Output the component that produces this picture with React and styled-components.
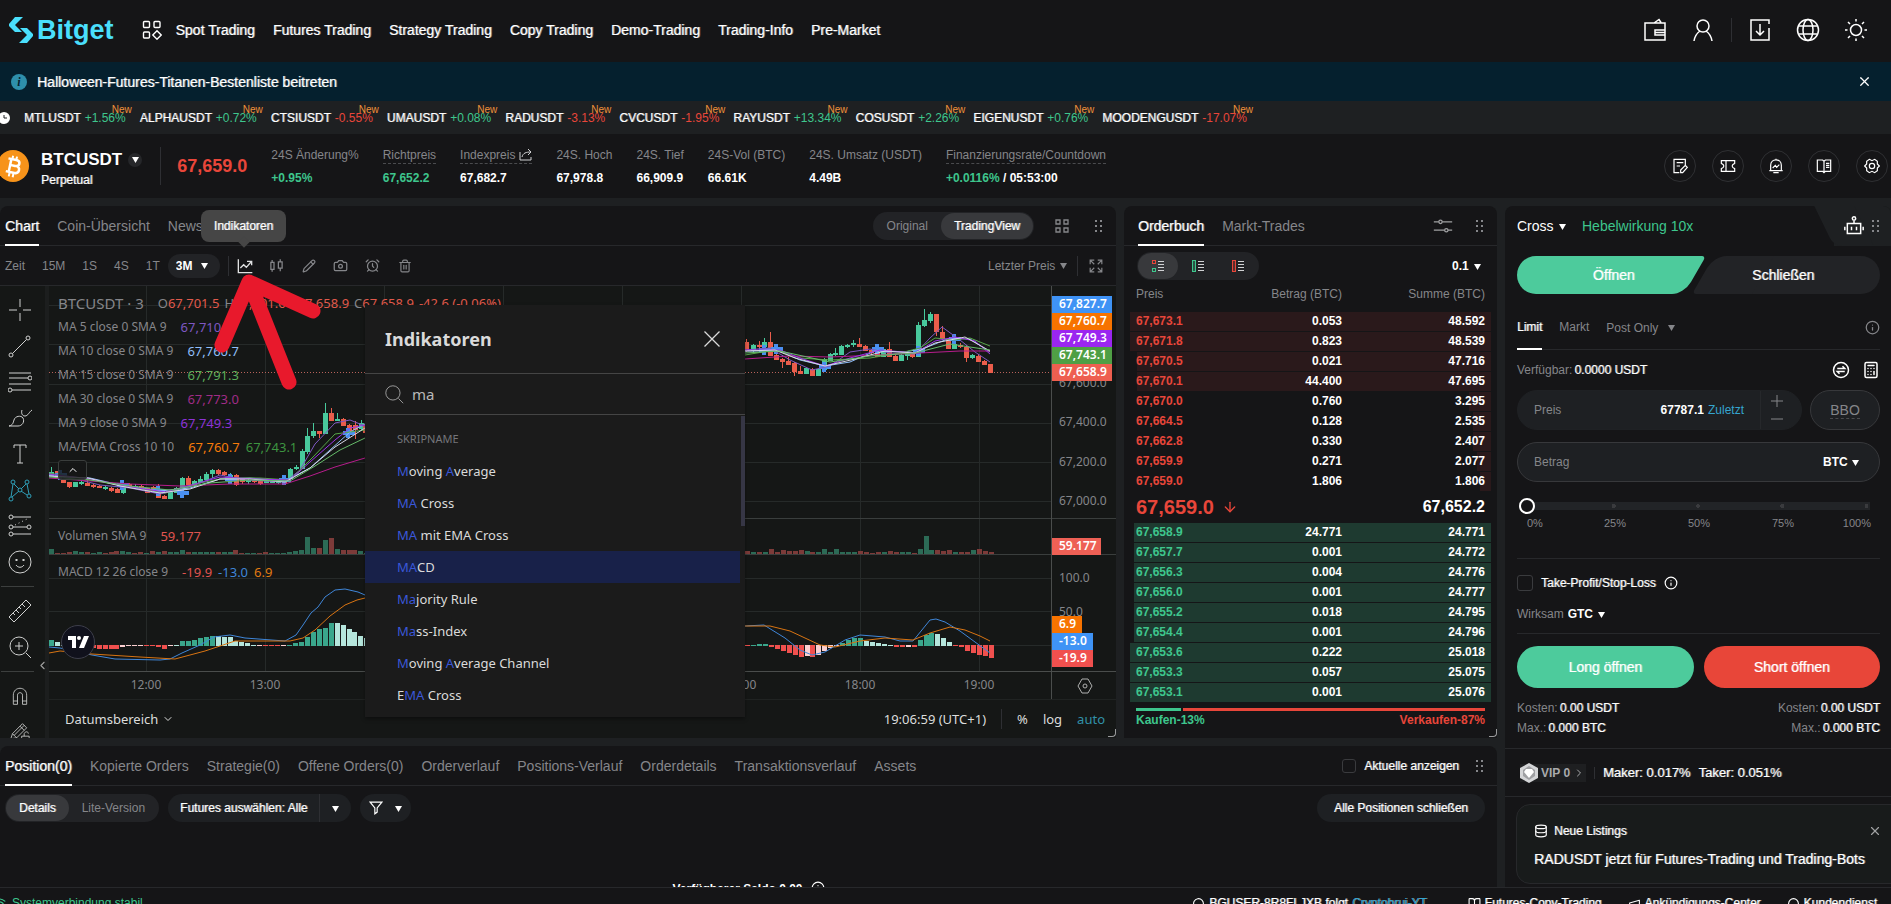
import { useState } from 'react';
import styled, { createGlobalStyle, css } from 'styled-components';
import {
  LuCamera,
  LuAlarmClock,
  LuTrash2,
  LuPencil,
  LuX,
  LuInfo,
  LuCalculator,
  LuDatabase,
  LuHeadphones,
  LuMegaphone,
  LuChevronDown,
  LuChevronUp,
  LuChevronRight,
  LuChevronLeft,
  LuBookOpen,
  LuArrowDown,
  LuWifi,
  LuMessageCircle,
} from 'react-icons/lu';

const GREEN = '#3ec68d';
const RED = '#e8463a';
const MUTED = '#85868a';
const PANEL = '#151517';
const GAP = '#1e2022';

const GlobalStyle = createGlobalStyle`
  * {
    box-sizing: border-box;
  }
  body {
    margin: 0;
    background: ${GAP};
    color: #ffffff;
    font-family: 'Liberation Sans', Arial, sans-serif;
    font-size: 12px;
    line-height: 16px;
    overflow: hidden;
  }
  button, input, select {
    font: inherit;
    color: inherit;
    background: none;
    border: 0;
    padding: 0;
    margin: 0;
    outline: none;
  }
  button, select {
    cursor: pointer;
    white-space: nowrap;
  }
  a {
    color: inherit;
    text-decoration: none;
  }
  svg {
    display: block;
    flex-shrink: 0;
  }
`;

const medium = css`
  text-shadow: 1px 0 rgba(255, 255, 255, 0.5);
`;

const flexCenter = css`
  display: flex;
  align-items: center;
  justify-content: center;
`;

const Page = styled.div`
  display: flex;
  flex-direction: column;
  height: 100vh;
  white-space: nowrap;
`;

/* ---------- header ---------- */

const Header = styled.header`
  display: flex;
  align-items: center;
  height: 62px;
  padding: 0 23px 2px 8px;
  background: ${PANEL};
`;

const Logo = styled.a`
  display: flex;
  align-items: center;
  gap: 3px;
  margin-right: 28px;
  color: #4adffc;
  font-size: 27px;
  font-weight: 700;
  line-height: 32px;
`;

const Nav = styled.nav`
  display: flex;
  align-items: center;
  gap: 18px;
  margin-left: 14px;
  font-size: 14px;
  ${medium};
`;

const HeaderIcons = styled.div`
  display: flex;
  align-items: center;
  gap: 24px;
  margin-left: auto;
`;

const IconButton = styled.button`
  ${flexCenter};
  width: ${(props) => props.$size || 24}px;
  height: ${(props) => props.$size || 24}px;
  color: ${(props) => props.$color || '#ffffff'};
`;

const Divider = styled.span`
  width: 1px;
  height: ${(props) => props.$h || 20}px;
  background: #2e2f33;
`;

const HeaderDivider = styled(Divider)`
  margin: 0 -8px;
`;

const Banner = styled.div`
  display: flex;
  align-items: center;
  height: 39px;
  padding: 0 19px 0 11px;
  background: #05202e;
  font-size: 14px;
`;

const BannerBadge = styled.span`
  ${flexCenter};
  width: 16px;
  height: 16px;
  margin-right: 10px;
  border-radius: 50%;
  background: #2e8fab;
  color: #05202e;
  font-family: 'Liberation Serif', serif;
  font-size: 12px;
  font-style: italic;
  font-weight: 700;
`;

const BannerText = styled.a`
  flex: 1;
  ${medium};
`;

/* ---------- ticker ---------- */

const Ticker = styled.div`
  display: flex;
  align-items: center;
  gap: 14px;
  height: 33px;
  background: ${GAP};
  overflow: hidden;
`;

const TickerItem = styled.a`
  position: relative;
  display: flex;
  gap: 4px;
  font-size: 12px;
  ${medium};
`;

const Change = styled.span`
  color: ${(props) => (props.$up ? GREEN : RED)};
  text-shadow: none;
`;

const NewFlag = styled.span`
  position: absolute;
  top: -6px;
  right: -6px;
  color: #f0913a;
  font-size: 10px;
  line-height: 12px;
  text-shadow: none;
`;

/* ---------- instrument bar ---------- */

const InfoBar = styled.section`
  display: flex;
  align-items: center;
  height: 64px;
  padding-right: 3px;
  background: ${PANEL};
`;

const Coin = styled.span`
  ${flexCenter};
  width: 32px;
  height: 32px;
  margin: 0 12px 0 -3px;
  border-radius: 50%;
  background: #f7931a;
`;

const Pair = styled.div`
  display: flex;
  flex-direction: column;
  gap: 2px;
  margin-right: 18px;
  padding-top: 5px;
`;

const PairName = styled.button`
  display: flex;
  align-items: center;
  gap: 6px;
  font-size: 17px;
  font-weight: 700;
  line-height: 20px;
`;

const PairCaret = styled.span`
  ${flexCenter};
  width: 14px;
  height: 14px;
  border-radius: 50%;
  background: #26272a;
`;

const PairKind = styled.span`
  ${medium};
`;

const LastPrice = styled.span`
  margin: 0 24px 0 16px;
  color: ${RED};
  font-size: 18px;
  font-weight: 700;
`;

const Stats = styled.dl`
  display: flex;
  gap: 24px;
  margin: 0;
`;

const StatLabel = styled.dt`
  display: flex;
  align-items: center;
  gap: 4px;
  height: 18px;
  margin-bottom: 6px;
  color: ${MUTED};
  border-bottom: 1px dashed ${(props) => (props.$dashed ? '#4a4b4e' : 'transparent')};
`;

const StatValue = styled.dd`
  margin: 0;
  color: ${(props) => (props.$up ? GREEN : '#ffffff')};
  font-weight: 700;
`;

const RoundTools = styled.div`
  display: flex;
  gap: 16px;
  margin-left: auto;
`;

const RoundButton = styled.button`
  ${flexCenter};
  width: 32px;
  height: 32px;
  border: 1px solid #2f3033;
  border-radius: 50%;
`;

/* ---------- page grid ---------- */

const Main = styled.main`
  display: flex;
  flex: 1;
  gap: 8px;
  min-height: 0;
  padding-top: 8px;
`;

const LeftArea = styled.div`
  display: flex;
  flex: 1;
  flex-direction: column;
  gap: 8px;
  min-width: 0;
`;

const TopRow = styled.div`
  display: flex;
  gap: 8px;
`;

const Panel = styled.section`
  position: relative;
  background: ${PANEL};
  border-radius: 8px 8px 0 0;
`;

const TabBar = styled.div`
  display: flex;
  gap: 18px;
  height: 40px;
  padding: 0 10px 0 ${(props) => props.$left || 5}px;
  border-bottom: 1px solid #27282b;
`;

const Tab = styled.button`
  height: 40px;
  padding-top: 2px;
  color: ${(props) => (props.$active ? '#ffffff' : MUTED)};
  font-size: 14px;
  border-bottom: 2px solid ${(props) => (props.$active ? '#ffffff' : 'transparent')};
  ${(props) => props.$active && medium};
`;

const TabTools = styled.div`
  display: flex;
  align-items: center;
  gap: ${(props) => props.$gap || 16}px;
  margin-left: auto;
`;

const Resize = styled.span`
  position: absolute;
  right: 0;
  bottom: 1px;
  width: 8px;
  height: 8px;
  border: solid #9a9b9d;
  border-width: 0 1px 1px 0;
  border-radius: 0 0 4px 0;
`;

/* ---------- chart ---------- */

const ChartPanel = styled(Panel)`
  flex: 1;
  min-width: 0;
`;

const Toggle = styled.div`
  display: flex;
  align-items: center;
  height: 28px;
  padding: 1px;
  border-radius: 14px;
  background: #222326;
`;

const ToggleItem = styled.button`
  ${flexCenter};
  height: 26px;
  padding: 0 ${(props) => props.$pad || 13}px;
  border-radius: 13px;
  background: ${(props) => (props.$active ? '#38393c' : 'none')};
  color: ${(props) => (props.$active ? '#ffffff' : MUTED)};
  ${(props) => props.$active && medium};
`;

const Intervals = styled.div`
  display: flex;
  align-items: center;
  height: 40px;
  padding: 0 12px 0 5px;
  border-bottom: 1px solid #27282b;
  color: ${MUTED};
`;

const Interval = styled.button`
  margin-right: 17px;
`;

const IntervalSelect = styled.div`
  display: flex;
  align-items: center;
  height: 24px;
  margin: 0 8px 0 -9px;
  padding: 0 12px 0 8px;
  border-radius: 12px;
  background: #222326;
  color: #ffffff;
  font-weight: 700;
`;

const ChartTools = styled.div`
  display: flex;
  gap: 8px;
  margin-left: 4px;
  flex: 1;
`;

const SelectBox = styled.label`
  display: inline-flex;
  align-items: center;
  gap: ${(props) => props.$gap || 4}px;

  select {
    appearance: none;
  }
`;

const ChartBody = styled.div`
  position: relative;
  display: flex;
  height: 452px;
  background: #151716;
  font-family: 'Noto Sans', 'Open Sans', sans-serif;
`;

const DrawBar = styled.div`
  width: 49px;
  padding: 6px 11px 0 1px;
  border-right: 4px solid #1c1e1e;
  overflow: hidden;
`;

const DrawTool = styled.button`
  ${flexCenter};
  width: 37px;
  height: 36px;
  color: ${(props) => (props.$active ? '#2f9fb8' : '#d0d1d0')};
`;

const DrawLine = styled.hr`
  height: 1px;
  margin: 6px 0;
  border: 0;
  background: #3c3f3e;
`;

const Collapse = styled.button`
  position: absolute;
  left: 36px;
  top: 373px;
  color: #a0a1a0;
`;

const PlotColumn = styled.div`
  display: flex;
  flex: 1;
  flex-direction: column;
  min-width: 0;
`;

const PlotRow = styled.div`
  display: flex;
  height: 414px;
  border-bottom: 1px solid #202322;
`;

const Plot = styled.div`
  flex: 1;
  min-width: 0;
  overflow: hidden;
`;

const Axis = styled.div`
  width: 65px;
  border-left: 1px solid #4a4d4c;
`;

const ChartFooter = styled.div`
  display: flex;
  align-items: center;
  flex: 1;
  gap: 15px;
  padding: 0 11px 0 16px;
  color: #dcdddc;
  font-size: 13px;

  button {
    display: flex;
    align-items: center;
    gap: 4px;
  }
`;

const Auto = styled.button`
  color: #3191a8;
`;

const Clock = styled.span`
  margin-left: auto;
`;

const Legend = styled.div`
  position: absolute;
  left: 58px;
  top: 5px;
  color: ${MUTED};
  font-size: 12px;
`;

const LegendRow = styled.div`
  display: flex;
  align-items: center;
  gap: ${(props) => props.$gap || 14}px;
  height: 24px;
`;

const Symbol = styled.span`
  font-size: 15px;
`;

const Ohlc = styled.span`
  display: flex;
  gap: 5px;
  font-size: 13px;
`;

const Num = styled.span`
  color: ${(props) => props.$color};
  font-size: 13px;
`;

const PaneLegend = styled(LegendRow)`
  position: absolute;
  left: 58px;
  top: ${(props) => props.$top}px;
  color: ${MUTED};
`;

const LegendFold = styled.button`
  ${flexCenter};
  position: absolute;
  left: 58px;
  top: 174px;
  width: 29px;
  height: 20px;
  border: 1px solid #3a3d3c;
  border-radius: 3px;
  background: rgba(21, 23, 22, 0.8);
`;

const TvBadge = styled.a`
  ${flexCenter};
  position: absolute;
  left: 61px;
  top: 339px;
  width: 34px;
  height: 34px;
  border: 1px solid #3d3e4a;
  border-radius: 50%;
  background: #10111c;
`;

const Tooltip = styled.div`
  ${flexCenter};
  position: absolute;
  left: 201px;
  top: 4px;
  z-index: 3;
  width: 85px;
  height: 32px;
  border-radius: 8px;
  background: #464646;
  ${medium};

  &::after {
    content: '';
    position: absolute;
    left: 50%;
    bottom: -4px;
    width: 8px;
    height: 8px;
    margin-left: -4px;
    background: #464646;
    transform: rotate(45deg);
  }
`;

const Pointer = styled.svg`
  position: absolute;
  left: 210px;
  top: 64px;
  z-index: 5;
  pointer-events: none;
`;

/* ---------- indicator dialog ---------- */

const Dialog = styled.div`
  position: absolute;
  left: 365px;
  top: 19px;
  z-index: 2;
  width: 380px;
  height: 412px;
  background: #1b1b1b;
  box-shadow: 0 2px 4px rgba(0, 0, 0, 0.4);
`;

const DialogHead = styled.div`
  display: flex;
  align-items: center;
  justify-content: space-between;
  height: 69px;
  padding: 0 23px 0 20px;
  border-bottom: 1px solid #454545;
`;

const DialogTitle = styled.h2`
  margin: 0;
  color: #dadada;
  font-size: 18px;
  line-height: 24px;
`;

const DialogSearch = styled.label`
  display: flex;
  align-items: center;
  gap: 8px;
  height: 41px;
  padding: 0 20px;
  border-bottom: 1px solid #454545;
  color: #b8b8b8;
  font-size: 15px;

  input {
    flex: 1;
  }
`;

const DialogList = styled.ul`
  height: 302px;
  margin: 0;
  padding: 8px 0 0;
  border-right: 5px solid transparent;
  list-style: none;
  color: #dadada;
  font-size: 13px;
  overflow: hidden;
`;

const DialogItem = styled.li`
  display: flex;
  align-items: center;
  height: 32px;
  padding-left: 32px;
  white-space: pre;
  background: ${(props) => (props.$active ? '#182149' : 'none')};

  mark {
    background: none;
    color: #3a57d8;
  }
`;

const DialogGroup = styled(DialogItem)`
  color: #74757a;
  font-size: 11px;
`;

const ScrollThumb = styled.span`
  position: absolute;
  right: 0;
  top: 111px;
  width: 4px;
  height: 110px;
  background: #363645;
`;

/* ---------- order book ---------- */

const BookPanel = styled(Panel)`
  width: 373px;
`;

const BookTools = styled.div`
  display: flex;
  align-items: center;
  justify-content: space-between;
  padding: 6px 16px 0 13px;
  font-weight: 700;
`;

const BookTable = styled.table`
  width: calc(100% - 12px);
  margin: 0 6px;
  border-collapse: separate;
  border-spacing: 0 1px;
  table-layout: fixed;

  th, td {
    height: 19px;
    padding: 0 6px;
    text-align: right;
    line-height: 19px;
  }
  th {
    height: 30px;
    padding-top: 4px;
    vertical-align: top;
    color: ${MUTED};
    font-weight: 400;
  }
  td {
    font-weight: 700;
  }
  th:first-child, td:first-child {
    width: 95px;
    text-align: left;
  }
  th:nth-child(2), td:nth-child(2) {
    width: 123px;
  }
`;

const BookRow = styled.tr`
  background: linear-gradient(
    to left,
    ${(props) => (props.$side === 'ask' ? '#2a191b' : '#1e3a30')} ${(props) => props.$fill}%,
    transparent ${(props) => props.$fill}%
  );

  td:first-child {
    color: ${(props) => (props.$side === 'ask' ? RED : GREEN)};
  }
`;

const MidPrice = styled.div`
  display: flex;
  align-items: center;
  height: 30px;
  padding: 0 12px;
  font-size: 16px;
  font-weight: 700;
`;

const MidLast = styled.span`
  display: flex;
  align-items: center;
  gap: 8px;
  flex: 1;
  color: ${RED};
  font-size: 20px;
`;

const Ratio = styled.div`
  display: flex;
  gap: 2px;
  margin: 5px 12px 0;
`;

const RatioPart = styled.span`
  flex: ${(props) => props.$share};
  height: 3px;
  background: ${(props) => props.$color};
`;

const RatioLabels = styled.div`
  display: flex;
  justify-content: space-between;
  padding: 1px 12px 0;
  font-weight: 700;
`;

const Tint = styled.span`
  color: ${(props) => props.$color};
`;

/* ---------- order form ---------- */

const FormPanel = styled(Panel)`
  width: 386px;
  overflow: hidden;
`;

const FormTop = styled.div`
  position: relative;
  display: flex;
  align-items: center;
  gap: 16px;
  height: 40px;
  padding-left: 12px;
  font-size: 14px;
  ${medium};
`;

const Leverage = styled.button`
  color: ${GREEN};
  text-shadow: none;
`;

const Notch = styled.div`
  position: relative;
  display: flex;
  align-items: center;
  gap: 7px;
  width: 57px;
  height: 40px;
  margin-left: auto;
  padding-left: 10px;
  isolation: isolate;
  background: ${GAP};

  &::before {
    content: '';
    position: absolute;
    z-index: -1;
    left: -10px;
    top: 0;
    width: 40px;
    height: 40px;
    border-radius: 0 0 0 8px;
    background: ${GAP};
    transform: skewX(26deg);
  }
`;

const FormBody = styled.div`
  padding: 10px 11px 0 12px;
`;

const SideSwitch = styled.div`
  display: flex;
  gap: 4px;
`;

const SideButton = styled.button`
  position: relative;
  flex: 1;
  height: 38px;
  padding: ${(props) => (props.$open ? '0 0 0 14px' : '0 14px 0 0')};
  isolation: isolate;
  font-size: 14px;
  ${medium};

  &::before {
    content: '';
    position: absolute;
    z-index: -1;
    top: 0;
    bottom: 0;
    ${(props) => (props.$open ? 'left: 0; right: 30px;' : 'left: 30px; right: 0;')}
    border-radius: 19px;
    background: ${(props) => (props.$open ? '#4dcb9c' : '#222326')};
  }
  &::after {
    content: '';
    position: absolute;
    z-index: -1;
    top: 0;
    bottom: 0;
    width: 60px;
    ${(props) =>
      props.$open
        ? 'right: 2px; border-radius: 0 4px 12px 0;'
        : 'left: 2px; border-radius: 12px 0 0 4px;'}
    background: ${(props) => (props.$open ? '#4dcb9c' : '#222326')};
    transform: skewX(-30deg);
  }
`;

const OrderTypes = styled.div`
  display: flex;
  align-items: center;
  gap: 17px;
  height: 44px;
  margin-top: 12px;
  border-bottom: 1px solid #27282b;
  color: ${MUTED};
`;

const OrderType = styled.button`
  height: 44px;
  border-bottom: 2px solid ${(props) => (props.$active ? '#ffffff' : 'transparent')};
  color: ${(props) => (props.$active ? '#ffffff' : MUTED)};
  ${(props) => props.$active && medium};
`;

const Row = styled.div`
  display: flex;
  align-items: center;
  justify-content: space-between;
  height: ${(props) => props.$h || 20}px;
`;

const Group = styled.span`
  display: flex;
  align-items: center;
  gap: ${(props) => props.$gap || 4}px;
`;

const Key = styled.span`
  color: ${MUTED};
`;

const Strong = styled.span`
  ${medium};
`;

const Fields = styled.div`
  display: flex;
  gap: 8px;
  margin-bottom: 12px;
`;

const Field = styled.label`
  display: flex;
  align-items: center;
  flex: 1;
  gap: 4px;
  min-width: 0;
  height: 40px;
  padding-left: 16px;
  border: 1px solid ${(props) => (props.$line ? '#37383b' : '#1f2124')};
  border-radius: 20px;
  background: #1e2023;
  color: ${MUTED};

  input {
    flex: 1;
    min-width: 0;
    color: #ffffff;
    text-align: right;
    font-weight: 700;
  }
`;

const Latest = styled.button`
  color: #35a5cf;
`;

const Stepper = styled.span`
  display: flex;
  flex-direction: column;
  justify-content: space-between;
  height: 38px;
  margin-left: 12px;
  padding: 4px 18px 4px 10px;
  border-left: 1px solid #26282b;
`;

const Bbo = styled.button`
  width: 70px;
  height: 40px;
  border: 1px solid #37383b;
  border-radius: 20px;
  background: #1e2023;
  color: ${MUTED};
  font-size: 14px;

  span {
    border-bottom: 1px dashed #4a4b4e;
  }
`;

const Unit = styled.span`
  margin-right: 20px;
  color: #ffffff;
  font-weight: 700;
`;

const Slider = styled.input`
  display: block;
  appearance: none;
  width: calc(100% - 12px);
  height: 16px;
  margin: 16px 0 0 2px;
  background: radial-gradient(circle at 27% 50%, #3a3b3e 2px, transparent 2px),
    radial-gradient(circle at 51% 50%, #3a3b3e 2px, transparent 2px),
    radial-gradient(circle at 75% 50%, #3a3b3e 2px, transparent 2px),
    radial-gradient(circle at 99% 50%, #3a3b3e 2px, transparent 2px),
    linear-gradient(transparent 4px, #222427 4px, #222427 12px, transparent 12px);

  &::-webkit-slider-thumb {
    appearance: none;
    width: 16px;
    height: 16px;
    border: 2px solid #ffffff;
    border-radius: 50%;
    background: ${PANEL};
  }
`;

const Marks = styled.div`
  display: grid;
  grid-template-columns: 46px 1fr 1fr 1fr 46px;
  margin: 1px 9px 0 10px;
  color: ${MUTED};
  font-size: 11px;
  text-align: center;

  span:first-child {
    text-align: left;
  }
  span:last-child {
    text-align: right;
  }
`;

const Rule = styled.hr`
  height: 1px;
  margin: 0;
  border: 0;
  background: #27282b;
`;

const Conditions = styled.div`
  margin: 17px 0 0;
  padding: 8px 0 4px;
  border: solid #27282b;
  border-width: 1px 0;
`;

const Check = styled.input`
  appearance: none;
  width: ${(props) => props.$size}px;
  height: ${(props) => props.$size}px;
  border: 1px solid #3a3b3e;
  border-radius: 3px;
`;

const CheckLabel = styled.label`
  display: flex;
  align-items: center;
  gap: 8px;
  ${medium};
`;

const Submit = styled.button`
  flex: 1;
  height: 42px;
  border-radius: 21px;
  background: ${(props) => props.$color};
  font-size: 14px;
  ${medium};
`;

const SubmitRow = styled.div`
  display: flex;
  gap: 10px;
  margin: 12px 0 10px;
`;

const Fees = styled.div`
  display: flex;
  align-items: center;
  gap: 8px;
  height: 49px;
  padding-left: 15px;
  border: solid #27282b;
  border-width: 1px 0;
  margin-top: 10px;
  font-size: 13px;
`;

const Vip = styled.button`
  display: flex;
  align-items: center;
  gap: 3px;
  width: 66px;
  height: 18px;
  background: #1e1f21;
  color: #a9aaac;
  font-size: 12px;
  font-weight: 700;
`;

const News = styled.div`
  height: 80px;
  margin: 7px -12px 0 11px;
  padding: 16px 21px 0 17px;
  border: 1px solid #27282b;
  border-radius: 14px 0 0 14px;
  background: #181b1b;
`;

const NewsLink = styled.a`
  display: block;
  margin-top: 10px;
  font-size: 14px;
  ${medium};
`;

/* ---------- positions ---------- */

const PositionPanel = styled(Panel)`
  display: flex;
  flex: 1;
  flex-direction: column;
  min-height: 0;
  overflow: hidden;
`;

const PositionTools = styled.div`
  display: flex;
  gap: 9px;
  padding: 8px 12px 0 5px;
`;

const Pill = styled.button`
  display: flex;
  align-items: center;
  height: 28px;
  padding: 0 ${(props) => props.$pad || 12}px;
  gap: 12px;
  border-radius: 14px;
  background: #1e2023;
  ${medium};
`;

const PushRight = styled(Pill)`
  margin-left: auto;
`;

const Balance = styled.div`
  display: flex;
  justify-content: center;
  gap: 8px;
  padding-top: 59px;
  font-weight: 700;
`;

const Footer = styled.footer`
  flex-shrink: 0;
  height: 17px;
  border-top: 1px solid #27282b;
  background: ${PANEL};
  overflow: hidden;
`;

const FooterRow = styled.div`
  display: flex;
  align-items: center;
  height: 30px;
  padding-right: 14px;
  font-size: 12px;
  ${medium};
`;

const FooterLink = styled.a`
  display: flex;
  align-items: center;
  gap: 4px;
  margin-left: ${(props) => props.$ml || 26}px;
`;

const Status = styled.span`
  display: flex;
  align-items: center;
  gap: 6px;
  flex: 1;
  margin-left: -8px;
  color: ${GREEN};
  text-shadow: none;
`;

/* ---------- icons ---------- */

const Icon = ({ size = 20, w = 1, children }) => (
  <svg
    width={size}
    height={size}
    viewBox='0 0 24 24'
    fill='none'
    stroke='currentColor'
    strokeWidth={w}
  >
    {children}
  </svg>
);

const Caret = ({ size = 7 }) => (
  <svg width={size} height={size} viewBox='0 0 8 8' fill='currentColor'>
    <path d='M0 1h8L4 8z' />
  </svg>
);

const Dots = () => (
  <svg width='8' height='12' viewBox='0 0 8 12' fill='#85868a'>
    {[1, 6].map((x) =>
      [0, 5, 10].map((y) => <rect key={`${x}-${y}`} x={x} y={y} width='2' height='2' />)
    )}
  </svg>
);

const Select = ({ label, value, gap, caret }) => (
  <SelectBox $gap={gap}>
    <select aria-label={label} defaultValue={value}>
      <option>{value}</option>
    </select>
    <Caret size={caret} />
  </SelectBox>
);

const BookIcon = ({ top, bottom }) => (
  <svg width='12' height='12' viewBox='0 0 12 12' fill='none'>
    {top === bottom ? (
      <rect x='0.5' y='0.5' width='3' height='11' fill={top} fillOpacity='0.3' stroke={top} />
    ) : (
      <>
        <rect x='0.5' y='0.5' width='3' height='3' stroke={top} />
        <rect x='0.5' y='8.5' width='3' height='3' stroke={bottom} />
      </>
    )}
    <path d='M6 1.5h6M6 4.500h6M6 7.500h6M6 10.500h6' stroke='#d0d1d3' />
  </svg>
);

const drawTools = [
  <path key='a' d='M12 1v8M12 15v8M1 12h8M15 12h8' />,
  <g key='b'>
    <circle cx='3' cy='21' r='2' />
    <circle cx='20' cy='4' r='2' />
    <path d='M4.500 19.500L18.500 5.500' />
  </g>,
  <g key='c'>
    <path d='M1 3h22M1 8h19M1 14h22M4 20h19' />
    <circle cx='22' cy='8' r='2' />
    <circle cx='2' cy='20' r='2' />
  </g>,
  <path
    key='d'
    d='M1 20c4-1 4-3 5-6 1-4 7-5 9-2 2 4-1 8-5 8zM14 4c-1 3 0 6 3 6 3 0 4-4 7-6'
  />,
  <path key='e' d='M6 6V3h12v3M12 3v18M9 21h6' />,
  <g key='f'>
    <circle cx='5' cy='4' r='2' />
    <circle cx='19' cy='4' r='2' />
    <circle cx='12' cy='12' r='2' />
    <circle cx='3' cy='21' r='2' />
    <circle cx='21' cy='18' r='2' />
    <path d='M5 6L3 19M19 6l2 10M6 6l5 5M18 6l-5 5M4 19l7-6M13 13l6 4' />
  </g>,
  <g key='g'>
    <circle cx='3' cy='3' r='2' />
    <circle cx='3' cy='13' r='2' />
    <circle cx='3' cy='20' r='2' />
    <circle cx='21' cy='13' r='2' />
    <path d='M5 3h18M5 13h14M5 20h18' />
    <path d='M7 11l12-6' strokeDasharray='1 3' />
  </g>,
  <g key='h'>
    <circle cx='12' cy='12' r='11' />
    <path d='M8.500 9v2M15.500 9v2' strokeWidth='2' />
    <path d='M8 15c2 3 6 3 8 0' />
  </g>,
];

const lowerTools = [
  <path
    key='a'
    d='M1 18L18 1l5 5L6 23zM5 14l2 2M8 11l3 3M11 8l2 2M14 5l3 3'
  />,
  <g key='b'>
    <circle cx='11' cy='11' r='9' />
    <path d='M11 7v8M7 11h8M18 18l5 5' />
  </g>,
];

const magnetTools = [
  <path
    key='a'
    d='M4 22V11c0-11 16-11 16 0v11h-5V11c0-4-6-4-6 0v11zM4 18h5M15 18h5'
  />,
  <path
    key='b'
    d='M1 20l2-6L15 2l5 5L8 19zM12 5l5 5M3 14l5 5M5 16L17 4M14 17h9v7h-9zM17 17v-3c1-3 5-3 5 0'
  />,
];

/* ---------- chart data ---------- */

const GRID_X = [146, 265, 384, 503, 622, 741, 860, 979];
const GRID_Y = [305, 344, 384, 423, 462, 501, 578, 611, 645];

// x, high, open/close top, open/close bottom, low, rising
const CANDLES = [
  [51, 467, 472, 476, 476, 1], [57, 471, 471, 478, 478, 0], [63, 479, 480, 483, 483, 0],
  [69, 482, 482, 487, 488, 0], [75, 482, 482, 487, 487, 1], [81, 480, 482, 484, 485, 1],
  [87, 480, 483, 486, 486, 0], [93, 484, 485, 487, 488, 0], [99, 485, 486, 488, 488, 0],
  [105, 486, 487, 489, 490, 1], [111, 487, 488, 491, 492, 0], [117, 488, 489, 493, 493, 0],
  [123, 482, 486, 493, 494, 1], [129, 483, 484, 487, 488, 0], [135, 484, 486, 488, 489, 1],
  [141, 484, 486, 489, 489, 0], [147, 488, 488, 493, 493, 0], [153, 486, 487, 491, 492, 0],
  [158, 484, 489, 498, 498, 0], [164, 495, 496, 499, 499, 0], [170, 490, 492, 499, 499, 1],
  [176, 487, 488, 493, 493, 1], [182, 477, 478, 490, 490, 1], [188, 476, 478, 485, 485, 0],
  [194, 480, 481, 486, 488, 1], [200, 476, 479, 483, 483, 1], [206, 472, 474, 480, 480, 1],
  [212, 469, 470, 474, 478, 1], [218, 469, 470, 474, 475, 0], [224, 471, 472, 475, 476, 0],
  [230, 473, 475, 480, 480, 1], [236, 474, 475, 485, 486, 0], [242, 478, 478, 482, 484, 0],
  [248, 479, 480, 482, 484, 1], [254, 478, 480, 482, 483, 0], [260, 480, 481, 484, 485, 0],
  [266, 480, 481, 483, 483, 1], [272, 479, 481, 483, 483, 1], [278, 480, 481, 483, 484, 1],
  [284, 476, 479, 483, 484, 0], [290, 468, 469, 479, 479, 1], [296, 465, 467, 469, 470, 1],
  [302, 449, 451, 469, 469, 1], [307, 428, 436, 452, 454, 1], [313, 423, 431, 436, 438, 1],
  [319, 431, 431, 434, 438, 0], [325, 403, 413, 434, 434, 1], [331, 408, 413, 421, 421, 0],
  [337, 413, 419, 421, 421, 1], [343, 418, 419, 426, 426, 0], [349, 424, 425, 431, 433, 0],
  [355, 421, 425, 430, 439, 0], [361, 420, 423, 429, 430, 1], [365, 423, 424, 433, 434, 0],
  [746, 339, 342, 351, 352, 0], [753, 344, 345, 351, 352, 1], [759, 341, 345, 347, 350, 0],
  [764, 338, 342, 347, 350, 1], [770, 332, 342, 356, 356, 0], [776, 352, 355, 360, 360, 0],
  [782, 358, 359, 362, 368, 0], [788, 357, 361, 365, 365, 0], [794, 362, 363, 372, 376, 0],
  [800, 366, 371, 374, 374, 0], [806, 367, 368, 374, 374, 1], [812, 368, 369, 376, 376, 0],
  [818, 368, 369, 376, 376, 1], [824, 358, 359, 370, 372, 1], [830, 353, 354, 361, 361, 1],
  [835, 348, 353, 355, 356, 1], [841, 345, 346, 355, 355, 1], [847, 344, 345, 347, 348, 1],
  [853, 340, 343, 345, 347, 1], [859, 338, 344, 347, 347, 0], [865, 345, 346, 351, 351, 0],
  [871, 349, 350, 353, 355, 0], [877, 345, 352, 357, 357, 0], [883, 348, 349, 357, 357, 1],
  [889, 342, 349, 357, 357, 0], [895, 355, 356, 361, 361, 0], [901, 354, 355, 361, 361, 1],
  [907, 351, 354, 356, 360, 1], [912, 352, 354, 357, 358, 0], [918, 322, 325, 357, 357, 1],
  [924, 309, 320, 326, 327, 1], [930, 312, 314, 321, 323, 1], [936, 314, 314, 332, 336, 0],
  [942, 326, 332, 339, 340, 0], [948, 338, 339, 349, 349, 0], [954, 340, 344, 349, 349, 1],
  [960, 343, 345, 347, 348, 0], [966, 345, 347, 358, 362, 0], [972, 354, 355, 358, 359, 1],
  [978, 354, 356, 362, 362, 0], [984, 360, 361, 365, 365, 0], [990, 364, 364, 373, 373, 0],
];

const AVERAGES = [
  ['#7e57c2', 'M49 475L80 480 100 485 130 488 160 494 180 490 200 483 220 475 245 480 285 482 300 470 315 444 335 423 350 420 365 426M745 350L770 348 790 360 812 370 830 366 850 352 870 349 890 353 915 354 930 338 942 327 960 340 975 352 990 362'],
  ['#90bff9', 'M49 476L90 478 120 485 160 491 190 488 220 479 250 478 285 481 310 468 330 450 350 432 365 424M745 351L780 351 800 360 825 366 850 362 875 351 905 352 925 348 950 338 970 339 990 352'],
  ['#57a64a', 'M49 473L90 480 130 487 165 493 195 484 225 478 260 478 290 480 312 458 335 434 365 430M745 355L775 350 800 358 830 360 870 358 900 353 920 348 935 338 955 340 970 338 990 346'],
  ['#b71c8c', 'M49 478L90 481 130 484 180 486 230 484 285 484 310 476 335 467 365 458M745 359L790 356 830 357 880 355 920 353 960 351 990 351'],
  ['#9c33e8', 'M49 474L90 479 125 486 165 492 195 484 220 477 255 479 290 480 310 462 335 440 350 428 365 425M745 350L780 350 800 358 825 366 850 358 880 350 915 353 935 341 955 337 975 341 990 354'],
  ['#d8d8e6', 'M49 476L88 478 120 486 160 493 190 489 220 479 250 479 285 482 310 468 335 447 365 428M745 351L775 350 795 358 825 366 855 359 885 351 915 353 935 343 965 337 990 351'],
  ['#66bb6a', 'M49 477L90 480 130 486 170 490 210 483 250 480 290 481 315 466 340 450 365 438M745 353L780 351 830 362 870 356 915 353 950 344 990 350'],
];

const CROSSES = [
  [60, 475], [122, 485], [158, 491], [182, 493], [230, 479], [284, 480], [348, 433], [764, 350],
  [776, 349], [824, 367], [877, 349], [918, 351], [954, 339],
];

const VOLUME = [
  [51, '5g 1r 1r 2r 3g 2g 2r 1g 2g 1r 2r 3r 3g 2g 1r 2r 1g 3r 2g 3r 2g 2g 4g 2r 2g 2g 2g 2g 2r 2g 2g 4r 1r 1g 1g 1r 2r 1g 1g 1g 2g 3g 4g 17g 6g 6r 14g 16r 5g 4r 4r 4r 3g 1g'],
  [747, '3r 2g 2r 2g 5r 2r 4r 3r 3r 4r 3g 2r 2g 5g 2g 5g 2g 2g 2g 3r 2r 1r 2r 2g 3r 2r 2g 2g 1r 5g 18g 4g 4r 3r 4r 2g 2r 2r 4g 5r 3r 2r'],
];

// G/g rising strong/weak, R/r falling strong/weak
const MACD = [
  [51, '6G 4g 1g 1r 2R 2R 3R 3R 4R 4R 4R 4R 2r 1r 1r 1r 1R 1R 2R 4R 1r 1g 5G 5G 6G 8G 9G 10G 10g 9g 9g 5g 4g 3g 1g 1r 1R 1R 1R 1r 1G 3G 4G 9G 14G 17G 18G 23G 23g 21g 17g 14g 10g 8g 3g'],
  [747, '1R 1G 2G 2G 2R 4R 6R 8R 10R 12R 11r 12R 10r 6r 3r 1r 3G 6G 8G 8G 5g 4g 3g 2g 1g 2R 2R 2r 2R 6G 11G 13G 12g 8g 4g 1R 2R 6R 8R 10R 11R 13R'],
];

const MACD_COLORS = { G: '#3aa78c', g: '#b5e6dc', R: '#f0504e', r: '#fbcfd0' };

const bars = (groups) =>
  groups.flatMap(([start, list]) =>
    list.split(' ').map((item, i) => ({
      x: Math.round(start + i * 5.95) - 2,
      h: parseInt(item, 10),
      type: item.slice(-1),
    }))
  );

const PRICE_TAGS = [
  [296, '67,827.7', '#3f93f5', 60],
  [313, '67,760.7', '#f77300', 60],
  [330, '67,749.3', '#9b26f0', 60],
  [347, '67,743.1', '#4f9f45', 60],
  [364, '67,658.9', '#ee5f50', 60],
  [538, '59.177', '#ee6055', 49],
  [616, '6.9', '#f77300', 30],
  [633, '-13.0', '#3f93f5', 41],
  [650, '-19.9', '#f0504e', 41],
];

const PlotChart = () => (
  <svg width='1003' height='413' viewBox='49 286 1003 413'>
    <g shapeRendering='crispEdges'>
      {GRID_X.map((x) => (
        <rect key={x} x={x} y='286' width='1' height='385' fill='#262a29' />
      ))}
      {GRID_Y.map((y) => (
        <rect key={y} x='49' y={y} width='1003' height='1' fill='#262a29' />
      ))}
      <rect x='49' y='518' width='1003' height='1' fill='#3a3e3d' />
      <rect x='49' y='554' width='1003' height='1' fill='#3a3e3d' />
      <rect x='49' y='671' width='1003' height='1' fill='#4a4d4c' />
      <path d='M49 372.5H1052' stroke='#b8625a' strokeDasharray='1 2' />
      {bars(VOLUME).map(({ x, h, type }) => (
        <rect
          key={x}
          x={x}
          y={554 - h}
          width='5'
          height={h}
          fill={type === 'g' ? '#2c6b56' : '#7c3b39'}
        />
      ))}
      {bars(MACD).map(({ x, h, type }) => (
        <rect
          key={x}
          x={x}
          y={type === 'R' || type === 'r' ? 645 : 646 - h}
          width='5'
          height={h}
          fill={MACD_COLORS[type]}
        />
      ))}
      {CANDLES.map(([x, high, top, bottom, low, up]) => (
        <g key={x} fill={up ? '#48c99c' : '#ea5d4b'}>
          <rect x={x} y={high} width='1' height={low - high} />
          <rect x={x - 2} y={top} width='5' height={bottom - top} />
        </g>
      ))}
      {CROSSES.map(([x, y]) => (
        <path key={x} d={`M${x - 5} ${y}h12M${x} ${y - 5}v10`} stroke='#4a90f0' strokeWidth='4' />
      ))}
    </g>
    <g fill='none' strokeWidth='1' strokeLinejoin='round'>
      {AVERAGES.map(([color, d]) => (
        <path key={color} d={d} stroke={color} />
      ))}
      <path
        stroke='#3f86d8'
        d='M49 647L60 648 92 655 115 659 160 660 170 659 182 653 200 645 214 637 230 635 245 638 285 641 296 635 303 625 311 613 318 607 325 597 335 590 345 589 358 592 365 595M745 626L764 625 785 638 800 650 812 655 825 652 845 640 860 635 885 637 900 641 913 641 930 620 936 619 945 622 960 631 975 642 990 653'
      />
      <path
        stroke='#d87412'
        d='M49 653L60 651 92 654 140 657 175 659 205 651 235 641 265 641 290 641 303 638 315 630 330 616 345 605 357 600 365 598M745 626L770 626 790 631 820 645 835 647 860 641 885 638 913 640 930 633 950 627 965 630 980 636 990 641'
      />
    </g>
    <g fill='#85868a' fontSize='12' textAnchor='middle'>
      {GRID_X.map((x, i) => (
        <text key={x} x={x} y='689'>{`${12 + i}:00`}</text>
      ))}
    </g>
  </svg>
);

const AxisChart = () => (
  <svg width='64' height='413' viewBox='1052 286 64 413'>
    <g fill='#85868a' fontSize='12'>
      <text x='1059' y='387'>67,600.0</text>
      <text x='1059' y='426'>67,400.0</text>
      <text x='1059' y='466'>67,200.0</text>
      <text x='1059' y='505'>67,000.0</text>
      <text x='1059' y='582'>100.0</text>
      <text x='1059' y='616'>50.0</text>
    </g>
    <g shapeRendering='crispEdges'>
      <rect x='1052' y='518' width='64' height='1' fill='#3a3e3d' />
      <rect x='1052' y='554' width='64' height='1' fill='#3a3e3d' />
      <rect x='1052' y='671' width='64' height='1' fill='#4a4d4c' />
    </g>
    {PRICE_TAGS.map(([y, text, color, w]) => (
      <g key={text}>
        <rect x='1052' y={y} width={w} height='17' fill={color} />
        <text x='1059' y={y + 12} fill='#ffffff' fontSize='12' fontWeight='600'>
          {text}
        </text>
      </g>
    ))}
    <g fill='none' stroke='#b0b1b0'>
      <path d='M1078 686l4-7h6l4 7-4 7h-6z' />
      <circle cx='1085' cy='686' r='2' />
    </g>
  </svg>
);

/* ---------- page data ---------- */

const NAV = [
  'Spot Trading',
  'Futures Trading',
  'Strategy Trading',
  'Copy Trading',
  'Demo-Trading',
  'Trading-Info',
  'Pre-Market',
];

const TICKERS = [
  ['MTLUSDT', '+1.56%'],
  ['ALPHAUSDT', '+0.72%'],
  ['CTSIUSDT', '-0.55%'],
  ['UMAUSDT', '+0.08%'],
  ['RADUSDT', '-3.13%'],
  ['CVCUSDT', '-1.95%'],
  ['RAYUSDT', '+13.34%'],
  ['COSUSDT', '+2.26%'],
  ['EIGENUSDT', '+0.76%'],
  ['MOODENGUSDT', '-17.07%'],
];

const LEGEND = [
  ['MA 5 close 0 SMA 9', '67,710.8', '#7e57c2'],
  ['MA 10 close 0 SMA 9', '67,760.7', '#90bff9'],
  ['MA 15 close 0 SMA 9', '67,791.3', '#5cad5a'],
  ['MA 30 close 0 SMA 9', '67,773.0', '#a02c86'],
  ['MA 9 close 0 SMA 9', '67,749.3', '#8c33d8'],
];

const INDICATORS = [
  ['*M*oving *A*verage'],
  ['*MA* Cross'],
  ['*MA* mit EMA Cross'],
  ['*MA*CD', true],
  ['*Ma*jority Rule'],
  ['*Ma*ss-Index'],
  ['*M*oving *A*verage Channel'],
  ['E*MA* Cross'],
];

const ASKS = [
  ['67,673.1', '0.053', '48.592', 100],
  ['67,671.8', '0.823', '48.539', 100],
  ['67,670.5', '0.021', '47.716', 98],
  ['67,670.1', '44.400', '47.695', 98],
  ['67,670.0', '0.760', '3.295', 6],
  ['67,664.5', '0.128', '2.535', 5],
  ['67,662.8', '0.330', '2.407', 5],
  ['67,659.9', '0.271', '2.077', 4],
  ['67,659.0', '1.806', '1.806', 3],
];

const BIDS = [
  ['67,658.9', '24.771', '24.771', 99],
  ['67,657.7', '0.001', '24.772', 99],
  ['67,656.3', '0.004', '24.776', 99],
  ['67,656.0', '0.001', '24.777', 99],
  ['67,655.2', '0.018', '24.795', 99],
  ['67,654.4', '0.001', '24.796', 99],
  ['67,653.6', '0.222', '25.018', 100],
  ['67,653.3', '0.057', '25.075', 100],
  ['67,653.1', '0.001', '25.076', 100],
];

const POSITION_TABS = [
  'Position(0)',
  'Kopierte Orders',
  'Strategie(0)',
  'Offene Orders(0)',
  'Orderverlauf',
  'Positions-Verlauf',
  'Orderdetails',
  'Transaktionsverlauf',
  'Assets',
];

const highlight = (text) =>
  text.split('*').map((part, i) => (i % 2 ? <mark key={i}>{part}</mark> : part));

/* ---------- sections ---------- */

const TopHeader = () => (
  <Header>
    <Logo href='#'>
      <svg width='26' height='28' viewBox='0 0 26 28' fill='currentColor'>
        <path d='M7 1h8L7 9l7 7H7L1 10V8zM19 27h-8l8-8-7-7h7l6 6v2z' />
      </svg>
      Bitget
    </Logo>
    <IconButton $size={20} aria-label='Menu'>
      <svg
        width='20'
        height='20'
        viewBox='0 0 20 20'
        fill='none'
        stroke='currentColor'
        strokeWidth='1.4'
      >
        <rect x='1.500' y='1.500' width='6' height='6' rx='1' />
        <rect x='12' y='1.500' width='6' height='6' rx='1' />
        <rect x='1.500' y='12' width='6' height='6' rx='1' />
        <path d='M15 10.800l4.200 4.200-4.200 4.200-4.200-4.200z' />
      </svg>
    </IconButton>
    <Nav>
      {NAV.map((item) => (
        <a key={item} href='#'>
          {item}
        </a>
      ))}
    </Nav>
    <HeaderIcons>
      <IconButton aria-label='Wallet'>
        <Icon size={24} w={1.5}>
          <path d='M2 5h20v17H2zM22 12h-10v5h10M12 14.500h10M11 5l5-3.500 2 3' />
        </Icon>
      </IconButton>
      <IconButton aria-label='Account'>
        <Icon size={24} w={1.5}>
          <circle cx='12' cy='8' r='6' />
          <path d='M3 23c1-6 3-8 6-10M21 23c-1-6-3-8-6-10' />
        </Icon>
      </IconButton>
      <HeaderDivider $h={24} />
      <IconButton aria-label='Download'>
        <Icon size={24} w={1.5}>
          <path d='M21 10v12H3V2h18v4M12 6v11M8 13l4 4 4-4' />
        </Icon>
      </IconButton>
      <IconButton aria-label='Language'>
        <Icon size={24} w={1.5}>
          <circle cx='12' cy='12' r='10.500' />
          <ellipse cx='12' cy='12' rx='5' ry='10.500' />
          <path d='M3 8h18M3 16h18' />
        </Icon>
      </IconButton>
      <IconButton aria-label='Theme'>
        <Icon size={24} w={1.5}>
          <circle cx='12' cy='12' r='5.500' />
          <path d='M12 1v2.500M12 20.500V23M1 12h2.500M20.500 12H23M4 4l2 2M18 18l2 2M20 4l-2 2M6 18l-2 2' />
        </Icon>
      </IconButton>
    </HeaderIcons>
  </Header>
);

const TickerBar = () => (
  <Ticker>
    <svg width='10' height='12' viewBox='0 0 10 12'>
      <circle cx='4' cy='6' r='6' fill='#ffffff' />
      <path d='M4 3v3h3' stroke={GAP} fill='none' />
    </svg>
    {TICKERS.map(([name, change]) => (
      <TickerItem key={name} href='#'>
        {name}
        <Change $up={change[0] === '+'}>{change}</Change>
        <NewFlag>New</NewFlag>
      </TickerItem>
    ))}
  </Ticker>
);

const Instrument = () => (
  <InfoBar>
    <Coin>
      <svg width='20' height='24' viewBox='0 0 20 24' fill='none' stroke='#ffffff' strokeWidth='2.500'>
        <g transform='rotate(12 10 12)'>
          <path d='M4 5.500h8c5 0 5 6 0 6H7M7 11.500h6c5 0 5 7 0 7H4M7 5v14' />
          <path d='M8 2v4M12 2v4M8 19v4M12 19v4' strokeWidth='2' />
        </g>
      </svg>
    </Coin>
    <Pair>
      <PairName>
        BTCUSDT
        <PairCaret>
          <Caret />
        </PairCaret>
      </PairName>
      <PairKind>Perpetual</PairKind>
    </Pair>
    <Divider $h={38} />
    <LastPrice>67,659.0</LastPrice>
    <Stats>
      <div>
        <StatLabel>24S Änderung%</StatLabel>
        <StatValue $up>+0.95%</StatValue>
      </div>
      <div>
        <StatLabel $dashed>Richtpreis</StatLabel>
        <StatValue $up>67,652.2</StatValue>
      </div>
      <div>
        <StatLabel $dashed>
          Indexpreis
          <svg width='13' height='12' viewBox='0 0 13 12' fill='none' stroke='#d0d1d3'>
            <path d='M1 3v8h11V8M3 8c1-4 4-5 9-5M9 0l3 3-3 3' />
          </svg>
        </StatLabel>
        <StatValue>67,682.7</StatValue>
      </div>
      <div>
        <StatLabel>24S. Hoch</StatLabel>
        <StatValue>67,978.8</StatValue>
      </div>
      <div>
        <StatLabel>24S. Tief</StatLabel>
        <StatValue>66,909.9</StatValue>
      </div>
      <div>
        <StatLabel>24S-Vol (BTC)</StatLabel>
        <StatValue>66.61K</StatValue>
      </div>
      <div>
        <StatLabel>24S. Umsatz (USDT)</StatLabel>
        <StatValue>4.49B</StatValue>
      </div>
      <div>
        <StatLabel $dashed>Finanzierungsrate/Countdown</StatLabel>
        <StatValue>
          <Change $up>+0.0116%</Change> / 05:53:00
        </StatValue>
      </div>
    </Stats>
    <RoundTools>
      <RoundButton aria-label='Notes'>
        <Icon size={16} w={1.8}>
          <path d='M11 22H3V2h17v9M7 7h10M7 12h5M13 22v-4l7-7 3 3-7 8z' />
        </Icon>
      </RoundButton>
      <RoundButton aria-label='Coupons'>
        <Icon size={16} w={1.8}>
          <path d='M2 4h20v4c-5 2-5 6 0 8v4H2v-4c5-2 5-6 0-8zM9 5v14' />
        </Icon>
      </RoundButton>
      <RoundButton aria-label='Alerts'>
        <Icon size={16} w={1.8}>
          <path d='M2 19h20M4 19V11c0-11 16-11 16 0v8M8 22h8M7 15l4-4 2 3 4-4M12 1v2' />
        </Icon>
      </RoundButton>
      <RoundButton aria-label='Guide'>
        <Icon size={16} w={1.8}>
          <path d='M2 3h8l2 2 2-2h8v17h-8l-2 2-2-2H2zM12 5v17M15 8h5M15 11h5M15 14h5' />
        </Icon>
      </RoundButton>
      <RoundButton aria-label='Settings'>
        <Icon size={16} w={1.8}>
          <path d='M8 2l4 2 4-2 4 3v4l3 3-3 3v4l-4 3-4-2-4 2-4-3v-4l-3-3 3-3V5z' />
          <circle cx='12' cy='12' r='4' />
        </Icon>
      </RoundButton>
    </RoundTools>
  </InfoBar>
);

const IndicatorDialog = ({ onClose }) => {
  const [query, setQuery] = useState('ma');

  return (
    <Dialog role='dialog' aria-label='Indikatoren'>
      <DialogHead>
        <DialogTitle>Indikatoren</DialogTitle>
        <IconButton $size={20} $color='#dadada' aria-label='Close' onClick={onClose}>
          <Icon size={20} w={1.5}>
            <path d='M3 3l18 18M21 3L3 21' />
          </Icon>
        </IconButton>
      </DialogHead>
      <DialogSearch>
        <Icon size={19}>
          <circle cx='10' cy='10' r='9' />
          <path d='M17 17l6 6' />
        </Icon>
        <input aria-label='Search' value={query} onChange={(e) => setQuery(e.target.value)} />
      </DialogSearch>
      <DialogList>
        <DialogGroup>SKRIPNAME</DialogGroup>
        {INDICATORS.map(([text, active]) => (
          <DialogItem key={text} $active={active}>
            {highlight(text)}
          </DialogItem>
        ))}
      </DialogList>
      <ScrollThumb />
    </Dialog>
  );
};

const Chart = () => {
  const [dialog, setDialog] = useState(true);

  return (
    <ChartPanel>
      <TabBar>
        <Tab $active>Chart</Tab>
        <Tab>Coin-Übersicht</Tab>
        <Tab>News</Tab>
        <TabTools>
          <Toggle>
            <ToggleItem>Original</ToggleItem>
            <ToggleItem $active>TradingView</ToggleItem>
          </Toggle>
          <IconButton $color={MUTED} aria-label='Layout'>
            <Icon size={16} w={2}>
              <path d='M3 3h6v6H3zM15 3h6v6h-6zM3 15h6v6H3zM15 15h6v6h-6z' />
            </Icon>
          </IconButton>
          <IconButton $size={16} aria-label='Move'>
            <Dots />
          </IconButton>
        </TabTools>
      </TabBar>
      <Intervals>
        {['Zeit', '15M', '1S', '4S', '1T'].map((item) => (
          <Interval key={item}>{item}</Interval>
        ))}
        <IntervalSelect>
          <Select label='Interval' value='3M' gap={8} />
        </IntervalSelect>
        <Divider />
        <ChartTools>
          <IconButton $color='#e0e1e2' aria-label='Indikatoren' onClick={() => setDialog(true)}>
            <Icon size={16} w={2}>
              <path d='M2 2v20h21M5 15l5-5 4 4 7-8M15 5h7v6' />
            </Icon>
          </IconButton>
          <IconButton $color={MUTED} aria-label='Candles'>
            <Icon size={15} w={2}>
              <path d='M3 7h5v11H3zM5 3v4M5 18v4M15 6h6v10h-6zM18 2v4M18 16v5' />
            </Icon>
          </IconButton>
          <IconButton $color={MUTED} aria-label='Draw'>
            <LuPencil size={14} />
          </IconButton>
          <IconButton $color={MUTED} aria-label='Screenshot'>
            <LuCamera size={15} />
          </IconButton>
          <IconButton $color={MUTED} aria-label='Alarm'>
            <LuAlarmClock size={15} />
          </IconButton>
          <IconButton $color={MUTED} aria-label='Delete'>
            <LuTrash2 size={14} />
          </IconButton>
        </ChartTools>
        <Group $gap={10}>
          <Select label='Price type' value='Letzter Preis' />
          <Divider />
          <IconButton $size={16} $color={MUTED} aria-label='Fullscreen'>
            <Icon size={14} w={2}>
              <path d='M2 9V2h7M2 2l7 7M15 2h7v7M22 2l-7 7M2 15v7h7M2 22l7-7M22 15v7h-7M22 22l-7-7' />
            </Icon>
          </IconButton>
        </Group>
      </Intervals>
      <ChartBody>
        <DrawBar>
          {drawTools.map((shape, i) => (
            <DrawTool key={i} $active={i === 5} aria-label={`Tool ${i + 1}`}>
              <Icon size={24}>{shape}</Icon>
            </DrawTool>
          ))}
          <DrawLine />
          {lowerTools.map((shape, i) => (
            <DrawTool key={i} aria-label={`Measure ${i + 1}`}>
              <Icon size={24}>{shape}</Icon>
            </DrawTool>
          ))}
          <DrawLine />
          {magnetTools.map((shape, i) => (
            <DrawTool key={i} aria-label={`Lock ${i + 1}`}>
              <Icon size={20}>{shape}</Icon>
            </DrawTool>
          ))}
        </DrawBar>
        <PlotColumn>
          <PlotRow>
            <Plot>
              <PlotChart />
            </Plot>
            <Axis>
              <AxisChart />
            </Axis>
          </PlotRow>
          <ChartFooter>
            <button>
              Datumsbereich <LuChevronDown size={12} />
            </button>
            <Clock>19:06:59 (UTC+1)</Clock>
            <Divider />
            <button>%</button>
            <button>log</button>
            <Auto>auto</Auto>
          </ChartFooter>
        </PlotColumn>
        <Legend>
          <LegendRow>
            <Symbol>BTCUSDT · 3</Symbol>
            <Ohlc>
              <span>
                O<Num $color='#e05a4c'>67,701.5</Num>
              </span>
              <span>
                H<Num $color='#e05a4c'>67,701.6</Num>
              </span>
              <span>
                L<Num $color='#e05a4c'>67,658.9</Num>
              </span>
              <span>
                C<Num $color='#e05a4c'>67,658.9</Num>
              </span>
              <Num $color='#e05a4c'>-42.6 (-0.06%)</Num>
            </Ohlc>
          </LegendRow>
          {LEGEND.map(([name, value, color]) => (
            <LegendRow key={name}>
              {name}
              <Num $color={color}>{value}</Num>
            </LegendRow>
          ))}
          <LegendRow>
            MA/EMA Cross 10 10
            <Group $gap={6}>
              <Num $color='#f77c0a'>67,760.7</Num>
              <Num $color='#3d9440'>67,743.1</Num>
            </Group>
          </LegendRow>
        </Legend>
        <LegendFold aria-label='Fold'>
          <LuChevronUp size={12} />
        </LegendFold>
        <PaneLegend $top={238}>
          Volumen SMA 9<Num $color='#e05450'>59.177</Num>
        </PaneLegend>
        <PaneLegend $top={274}>
          MACD 12 26 close 9
          <Group $gap={6}>
            <Num $color='#e05450'>-19.9</Num>
            <Num $color='#3f86d8'>-13.0</Num>
            <Num $color='#e07a12'>6.9</Num>
          </Group>
        </PaneLegend>
        <TvBadge href='#' aria-label='TradingView'>
          <svg width='22' height='12' viewBox='0 0 22 12' fill='#ffffff'>
            <path d='M1 0h8v12H5V4H1z' />
            <circle cx='12' cy='2' r='2' />
            <path d='M17 0h5l-5 12h-5z' />
          </svg>
        </TvBadge>
        <Collapse aria-label='Collapse'>
          <LuChevronLeft size={13} />
        </Collapse>
        {dialog && <IndicatorDialog onClose={() => setDialog(false)} />}
      </ChartBody>
      <Tooltip role='tooltip'>Indikatoren</Tooltip>
      <Pointer width='120' height='140' viewBox='0 0 120 140'>
        <path
          d='M12 75L39 12L103 41M44 24L79 112'
          fill='none'
          stroke='#e8192c'
          strokeWidth='15'
          strokeLinecap='round'
          strokeLinejoin='round'
        />
      </Pointer>
      <Resize />
    </ChartPanel>
  );
};

const BookRows = ({ rows, side }) =>
  rows.map(([price, amount, sum, fill]) => (
    <BookRow key={price} $side={side} $fill={fill}>
      <td>{price}</td>
      <td>{amount}</td>
      <td>{sum}</td>
    </BookRow>
  ));

const OrderBook = () => (
  <BookPanel>
    <TabBar $left={14}>
      <Tab $active>Orderbuch</Tab>
      <Tab>Markt-Trades</Tab>
      <TabTools $gap={18}>
        <IconButton $size={20} $color='#a0a1a3' aria-label='Filter'>
          <Icon size={20} w={1.5}>
            <path d='M1 7h6M11 7h12M1 17h13M18 17h5' />
            <circle cx='9' cy='7' r='2' />
            <circle cx='16' cy='17' r='2' />
          </Icon>
        </IconButton>
        <IconButton $size={16} aria-label='Move'>
          <Dots />
        </IconButton>
      </TabTools>
    </TabBar>
    <BookTools>
      <Toggle>
        <ToggleItem $active $pad={14} aria-label='Both'>
          <BookIcon top={RED} bottom={GREEN} />
        </ToggleItem>
        <ToggleItem $pad={14} aria-label='Bids'>
          <BookIcon top={GREEN} bottom={GREEN} />
        </ToggleItem>
        <ToggleItem $pad={14} aria-label='Asks'>
          <BookIcon top={RED} bottom={RED} />
        </ToggleItem>
      </Toggle>
      <Select label='Tick' value='0.1' gap={5} />
    </BookTools>
    <BookTable>
      <thead>
        <tr>
          <th>Preis</th>
          <th>Betrag (BTC)</th>
          <th>Summe (BTC)</th>
        </tr>
      </thead>
      <tbody>
        <BookRows rows={ASKS} side='ask' />
      </tbody>
    </BookTable>
    <MidPrice>
      <MidLast>
        67,659.0 <LuArrowDown size={16} />
      </MidLast>
      67,652.2
    </MidPrice>
    <BookTable>
      <tbody>
        <BookRows rows={BIDS} side='bid' />
      </tbody>
    </BookTable>
    <Ratio>
      <RatioPart $share={13} $color={GREEN} />
      <RatioPart $share={87} $color={RED} />
    </Ratio>
    <RatioLabels>
      <Tint $color={GREEN}>Kaufen-13%</Tint>
      <Tint $color={RED}>Verkaufen-87%</Tint>
    </RatioLabels>
    <Resize />
  </BookPanel>
);

const CostCell = ({ label, value }) => (
  <Group $gap={2}>
    <Key>{label}</Key>
    <Strong>{value}</Strong>
  </Group>
);

const OrderForm = () => {
  const [price, setPrice] = useState('67787.1');
  const [amount, setAmount] = useState('');
  const [share, setShare] = useState(0);

  return (
    <FormPanel>
      <FormTop>
        <Select label='Margin' value='Cross' gap={5} />
        <Leverage>Hebelwirkung 10x</Leverage>
        <Notch>
          <Icon size={20} w={1.8}>
            <path d='M4 9h16v12H4zM12 9V6M1 13v4M23 13v4M9 13v4M15 13v4' />
            <circle cx='12' cy='3' r='2' />
          </Icon>
          <Dots />
        </Notch>
      </FormTop>
      <FormBody>
        <SideSwitch>
          <SideButton $open>Öffnen</SideButton>
          <SideButton>Schließen</SideButton>
        </SideSwitch>
        <OrderTypes>
          <OrderType $active>Limit</OrderType>
          <OrderType>Markt</OrderType>
          <Select label='Type' value='Post Only' gap={9} />
          <TabTools>
            <LuInfo size={15} />
          </TabTools>
        </OrderTypes>
        <Row $h={40}>
          <CostCell label='Verfügbar:' value='0.0000 USDT' />
          <Group $gap={12}>
            <Icon size={18} w={2}>
              <circle cx='12' cy='12' r='10' />
              <path d='M7 10h10l-3-3M17 14H7l3 3' />
            </Icon>
            <LuCalculator size={18} />
          </Group>
        </Row>
        <Fields>
          <Field>
            Preis
            <input value={price} onChange={(e) => setPrice(e.target.value)} />
            <Latest>Zuletzt</Latest>
            <Stepper>
              <svg width='12' height='12' viewBox='0 0 12 12' stroke={MUTED}>
                <path d='M0 6h12M6 0v12' />
              </svg>
              <svg width='12' height='12' viewBox='0 0 12 12' stroke={MUTED}>
                <path d='M0 6h12' />
              </svg>
            </Stepper>
          </Field>
          <Bbo>
            <span>BBO</span>
          </Bbo>
        </Fields>
        <Field $line>
          Betrag
          <input value={amount} onChange={(e) => setAmount(e.target.value)} />
          <Unit>
            <Select label='Unit' value='BTC' />
          </Unit>
        </Field>
        <Slider
          type='range'
          aria-label='Share'
          value={share}
          onChange={(e) => setShare(e.target.value)}
        />
        <Marks>
          {['0%', '25%', '50%', '75%', '100%'].map((m) => (
            <span key={m}>{m}</span>
          ))}
        </Marks>
      </FormBody>
      <FormBody>
        <Conditions>
          <Row $h={32}>
            <CheckLabel>
              <Check type='checkbox' $size={16} />
              Take-Profit/Stop-Loss
              <LuInfo size={14} />
            </CheckLabel>
          </Row>
          <Row $h={30}>
            <Group>
              <Key>Wirksam</Key>
              <b>
                <Select label='Time in force' value='GTC' />
              </b>
            </Group>
          </Row>
        </Conditions>
        <SubmitRow>
          <Submit $color='#4dcb9c'>Long öffnen</Submit>
          <Submit $color='#e84639'>Short öffnen</Submit>
        </SubmitRow>
        <Row>
          <CostCell label='Kosten:' value='0.00 USDT' />
          <CostCell label='Kosten:' value='0.00 USDT' />
        </Row>
        <Row>
          <CostCell label='Max.:' value='0.000 BTC' />
          <CostCell label='Max.:' value='0.000 BTC' />
        </Row>
      </FormBody>
      <Fees>
        <Vip>
          <svg width='18' height='20' viewBox='0 0 18 20'>
            <path d='M9 0l9 5v10l-9 5-9-5V5z' fill='#d4d5d7' />
            <path d='M9 3l6 4v6l-6 4-6-4V7z' fill='#9fa0a3' />
            <path d='M6 6h6l2 3-5 6-5-6z' fill='#ffffff' />
          </svg>
          VIP 0
          <LuChevronRight size={12} />
        </Vip>
        <Divider $h={12} />
        <Group $gap={8}>
          <Strong>Maker: 0.017%</Strong>
          <Strong>Taker: 0.051%</Strong>
        </Group>
      </Fees>
      <News>
        <Row>
          <Group $gap={6}>
            <LuDatabase size={14} />
            <Strong>Neue Listings</Strong>
          </Group>
          <IconButton $size={12} $color='#a0a1a3' aria-label='Dismiss'>
            <LuX size={14} />
          </IconButton>
        </Row>
        <NewsLink href='#'>RADUSDT jetzt für Futures-Trading und Trading-Bots</NewsLink>
      </News>
    </FormPanel>
  );
};

const Positions = () => (
  <PositionPanel>
    <TabBar>
      {POSITION_TABS.map((tab, i) => (
        <Tab key={tab} $active={i === 0}>
          {tab}
        </Tab>
      ))}
      <TabTools $gap={12}>
        <CheckLabel>
          <Check type='checkbox' $size={14} />
          Aktuelle anzeigen
        </CheckLabel>
        <IconButton $size={16} aria-label='Move'>
          <Dots />
        </IconButton>
      </TabTools>
    </TabBar>
    <PositionTools>
      <Toggle>
        <ToggleItem $active>Details</ToggleItem>
        <ToggleItem>Lite-Version</ToggleItem>
      </Toggle>
      <Pill>
        Futures auswählen: Alle
        <Divider $h={28} />
        <Caret />
      </Pill>
      <Pill $pad={9} aria-label='Filter'>
        <Icon size={14} w={2}>
          <path d='M2 2h20l-8 10v7l-4 3V12z' />
        </Icon>
        <Caret />
      </Pill>
      <PushRight $pad={17}>Alle Positionen schließen</PushRight>
    </PositionTools>
    <Balance>
      Verfügbarer Saldo 0.00 <LuInfo size={14} />
    </Balance>
  </PositionPanel>
);

const App = () => (
  <>
    <GlobalStyle />
    <Page>
      <TopHeader />
      <Banner>
        <BannerBadge>i</BannerBadge>
        <BannerText href='#'>Halloween-Futures-Titanen-Bestenliste beitreten</BannerText>
        <IconButton $size={16} aria-label='Close'>
          <LuX size={15} />
        </IconButton>
      </Banner>
      <TickerBar />
      <Instrument />
      <Main>
        <LeftArea>
          <TopRow>
            <Chart />
            <OrderBook />
          </TopRow>
          <Positions />
        </LeftArea>
        <OrderForm />
      </Main>
      <Footer>
        <FooterRow>
          <Status>
            <LuWifi size={14} />
            Systemverbindung stabil
          </Status>
          <FooterLink href='#'>
            <LuMessageCircle size={13} />
            BGUSER-8R8FLJXB folgt <Tint $color='#35a5cf'>Cryptobruj-YT</Tint>
          </FooterLink>
          <FooterLink href='#' $ml={41}>
            <LuBookOpen size={13} />
            Futures-Copy-Trading
          </FooterLink>
          <FooterLink href='#'>
            <LuMegaphone size={13} />
            Ankündigungs-Center
          </FooterLink>
          <FooterLink href='#'>
            <LuHeadphones size={13} />
            Kundendienst
          </FooterLink>
        </FooterRow>
      </Footer>
    </Page>
  </>
);

export default App;
